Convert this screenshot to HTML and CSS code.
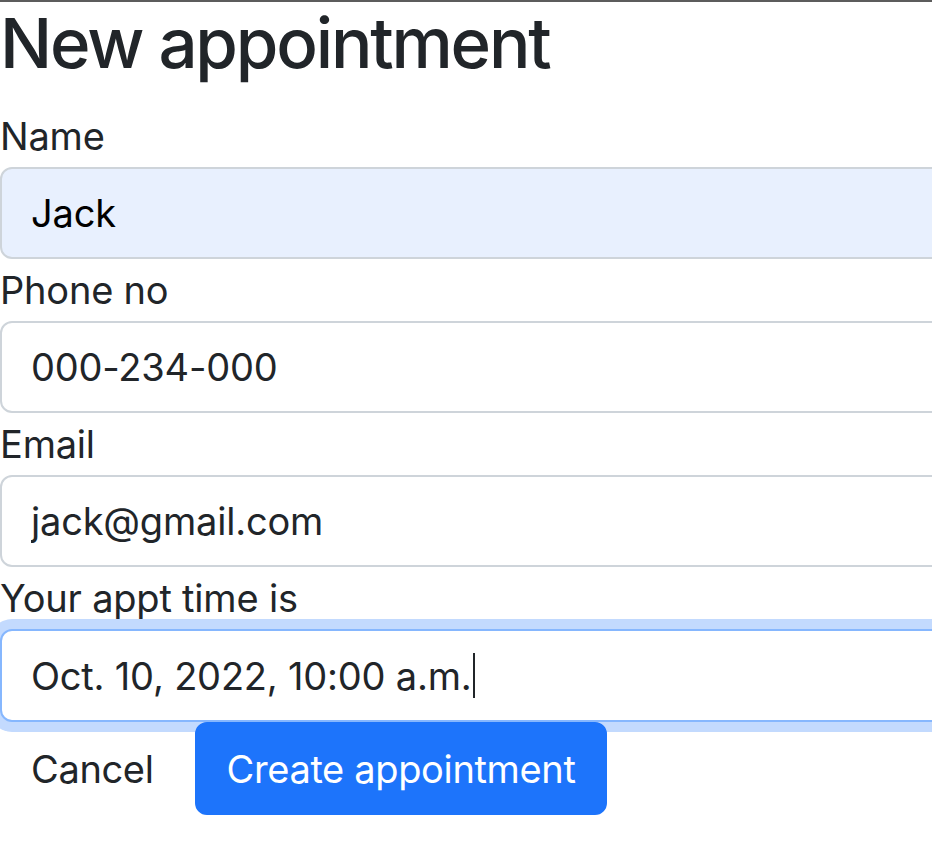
FILE: index.html
```html
<!DOCTYPE html>
<html lang="en">
<head>
<meta charset="utf-8">
<title>New appointment</title>
<link rel="stylesheet" href="styles.css">
</head>
<body>
<div class="page">
  <h1 class="title">New appointment</h1>
  <form class="form">
    <label class="label" for="name">Name</label>
    <input class="control autofilled" id="name" type="text" value="Jack">
    <label class="label" for="phone">Phone no</label>
    <input class="control" id="phone" type="text" value="000-234-000">
    <label class="label" for="email">Email</label>
    <input class="control" id="email" type="text" value="jack@gmail.com">
    <label class="label" for="appt">Your appt time is</label>
    <div class="control focused" id="appt">Oct. 10, 2022, 10:00 a.m.<span class="caret"></span></div>
    <div class="actions">
      <a class="btn btn-link" href="#">Cancel</a>
      <button class="btn btn-primary" type="button">Create appointment</button>
    </div>
  </form>
</div>
</body>
</html>
```
FILE: styles.css
```css
html, body {
  margin: 0;
  padding: 0;
  background: #fff;
  overflow: hidden;
}
body {
  font-family: Inter, "Liberation Sans", sans-serif;
  color: #212529;
  border-top: 2px solid #5c5c5c;
}
.page {
  width: 1100px;
}
.title {
  margin: 0 0 20px 0;
  font-size: 69px;
  font-weight: 500;
  line-height: 83px;
  letter-spacing: -2.2px;
}
.form {
  display: flex;
  flex-direction: column;
}
.label {
  display: block;
  font-size: 38px;
  line-height: 62px;
  letter-spacing: -0.2px;
}
.control {
  box-sizing: border-box;
  display: flex;
  align-items: center;
  width: 1100px;
  height: 92px;
  margin: 0;
  padding: 0 29px;
  font-family: inherit;
  font-size: 38px;
  letter-spacing: -0.2px;
  color: #212529;
  background: #fff;
  border: 2px solid #ced4da;
  border-radius: 12px;
  outline: none;
}
.autofilled {
  background: #e8f0fe;
  color: #000;
}
.focused {
  border-color: #86b7fe;
  box-shadow: 0 0 0 10px #c3dafe;
  height: 93px;
}
.caret {
  display: inline-block;
  width: 2px;
  height: 45px;
  margin-left: 1px;
  background: #212529;
}
.actions {
  display: flex;
  align-items: center;
  gap: 10px;
  margin-top: 0;
}
.btn {
  box-sizing: border-box;
  display: inline-flex;
  align-items: center;
  justify-content: center;
  height: 93px;
  padding: 0 29px;
  font-family: inherit;
  font-size: 38px;
  letter-spacing: -0.35px;
  border: 2px solid transparent;
  border-radius: 12px;
  text-decoration: none;
  position: relative;
}
.btn-link {
  color: #212529;
  background: transparent;
}
.btn-primary {
  color: #fff;
  background: #1d74fb;
  border-color: #1d74fb;
  padding: 0 30px;
}
```
